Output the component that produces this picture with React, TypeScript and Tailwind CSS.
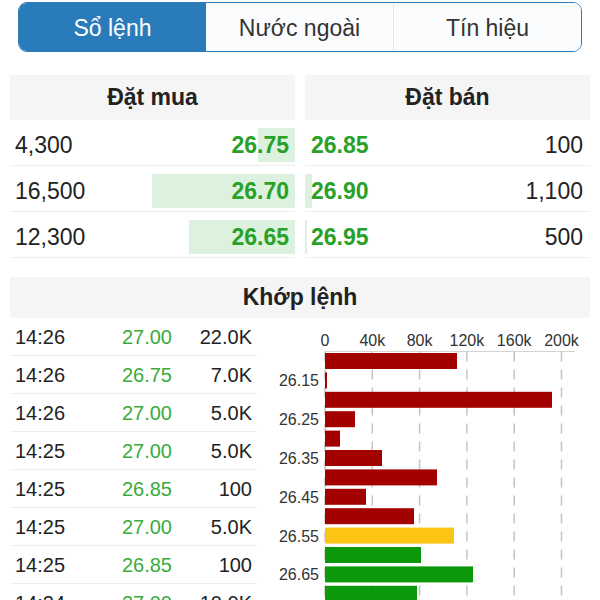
const tabs = ['Sổ lệnh', 'Nước ngoài', 'Tín hiệu'];

const bids = [
  { qty: '4,300', price: '26.75', bar: 37 },
  { qty: '16,500', price: '26.70', bar: 143 },
  { qty: '12,300', price: '26.65', bar: 106 },
];

const asks = [
  { qty: '100', price: '26.85', bar: 0 },
  { qty: '1,100', price: '26.90', bar: 7 },
  { qty: '500', price: '26.95', bar: 2 },
];

const matches = [
  ['14:26', '27.00', '22.0K'],
  ['14:26', '26.75', '7.0K'],
  ['14:26', '27.00', '5.0K'],
  ['14:25', '27.00', '5.0K'],
  ['14:25', '26.85', '100'],
  ['14:25', '27.00', '5.0K'],
  ['14:25', '26.85', '100'],
  ['14:24', '27.00', '10.0K'],
];

const RED = '#a30000';
const YELLOW = '#fcc514';
const GREEN = '#0b990b';

const volumeBars = [
  { w: 132, c: RED },
  { w: 2, c: RED, label: '26.15' },
  { w: 227, c: RED },
  { w: 30, c: RED, label: '26.25' },
  { w: 15, c: RED },
  { w: 57, c: RED, label: '26.35' },
  { w: 112, c: RED },
  { w: 41, c: RED, label: '26.45' },
  { w: 89, c: RED },
  { w: 129, c: YELLOW, label: '26.55' },
  { w: 96, c: GREEN },
  { w: 148, c: GREEN, label: '26.65' },
  { w: 92, c: GREEN },
];

const ticks = ['0', '40k', '80k', '120k', '160k', '200k'];

function VolumeChart() {
  const x0 = 68;
  const step = 47.3;
  return (
    <svg width={333} height={282} className="block">
      {ticks.map((t, i) => (
        <text
          key={t}
          x={x0 + i * step}
          y={28}
          textAnchor="middle"
          fontSize={16}
          fill="#333"
          fontFamily="Liberation Sans, Arial, sans-serif"
        >
          {t}
        </text>
      ))}
      <line x1={x0} y1={33.5} x2={318} y2={33.5} stroke="#d4d4d4" strokeWidth={1} />
      {ticks.map((t, i) => (
        <line
          key={'g' + t}
          x1={x0 + i * step}
          y1={33.5}
          x2={x0 + i * step}
          y2={282}
          stroke="#c4c4c4"
          strokeWidth={1.5}
          strokeDasharray="10 8"
        />
      ))}
      {volumeBars.map((b, i) => {
        const y = 35 + i * 19.4;
        return (
          <g key={i}>
            <rect x={x0} y={y} width={b.w} height={16} fill={b.c} />
            {b.label && (
              <text
                x={62}
                y={y + 14}
                textAnchor="end"
                fontSize={16}
                fill="#333"
                fontFamily="Liberation Sans, Arial, sans-serif"
              >
                {b.label}
              </text>
            )}
          </g>
        );
      })}
    </svg>
  );
}

export default function App() {
  return (
    <div className="h-[600px] w-[600px] overflow-hidden bg-white font-['Liberation_Sans',Arial,sans-serif] text-[#222]">
      <div className="ml-[18px] mt-[2px] flex h-[50px] w-[564px] overflow-hidden rounded-[9px] border border-[#2d7cb9]">
        {tabs.map((t, i) => (
          <div
            key={t}
            className={`flex flex-1 items-center justify-center pt-[2px] text-[23px] ${
              i === 0 ? 'bg-[#2a7bba] text-white' : 'bg-[#fbfcfd] text-[#333]'
            } ${i === 2 ? 'border-l border-[#e4e8ec]' : ''}`}
          >
            {t}
          </div>
        ))}
      </div>

      <div className="mx-[10px] mt-[23px] grid grid-cols-2 gap-[10px]">
        <div>
          <div className="flex h-[45px] items-center justify-center bg-[#f5f5f5] text-[23px] font-bold">
            Đặt mua
          </div>
          {bids.map((r) => (
            <div key={r.price} className="flex h-[46px] items-start border-b border-[#eeeeee] pt-[8px]">
              <span className="self-stretch pb-[4px] pl-[5px] text-[23px] leading-[34px]">{r.qty}</span>
              <div className="relative ml-auto flex h-[34px] items-center justify-end pr-[6px]">
                <div className="absolute inset-y-0 right-0 bg-[#dcf2df]" style={{ width: r.bar }} />
                <span className="relative text-[23px] font-bold text-[#28a128]">{r.price}</span>
              </div>
            </div>
          ))}
        </div>
        <div>
          <div className="flex h-[45px] items-center justify-center bg-[#f5f5f5] text-[23px] font-bold">
            Đặt bán
          </div>
          {asks.map((r) => (
            <div key={r.price} className="flex h-[46px] items-start border-b border-[#eeeeee] pt-[8px]">
              <div className="relative flex h-[34px] items-center pl-[6px]">
                <div className="absolute inset-y-0 left-0 bg-[#dcf2df]" style={{ width: r.bar }} />
                <span className="relative text-[23px] font-bold text-[#28a128]">{r.price}</span>
              </div>
              <span className="ml-auto pr-[7px] text-[23px] leading-[34px]">{r.qty}</span>
            </div>
          ))}
        </div>
      </div>

      <div className="mx-[10px] mt-[19px] flex h-[41px] items-center justify-center bg-[#f5f5f5] text-[23px] font-bold">
        Khớp lệnh
      </div>

      <div className="ml-[10px] flex">
        <div className="w-[247px]">
          {matches.map((m, i) => (
            <div key={i} className="flex h-[38px] items-center border-b border-[#eeeeee] text-[20px]">
              <span className="w-[100px] pl-[5px]">{m[0]}</span>
              <span className="w-[62px] text-right text-[#3aab3a]">{m[1]}</span>
              <span className="w-[80px] text-right">{m[2]}</span>
            </div>
          ))}
        </div>
        <VolumeChart />
      </div>
    </div>
  );
}
